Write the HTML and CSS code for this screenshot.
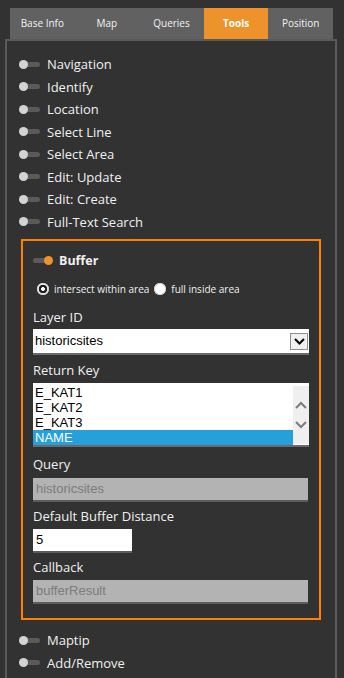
FILE: index.html
```html
<!DOCTYPE html>
<html lang="en">
<head>
    <meta charset="UTF-8">
    <meta name="viewport" content="width=device-width, initial-scale=1.0">
    <title>Tools</title>
    <link rel="stylesheet" href="styles.css">
</head>
<body>
    <div class="tabs">
        <div class="tab">Base Info</div>
        <div class="tab">Map</div>
        <div class="tab">Queries</div>
        <div class="tab active">Tools</div>
        <div class="tab">Position</div>
    </div>

    <div class="panel">
        <ul class="tools">
            <li class="tool"><span class="toggle"></span>Navigation</li>
            <li class="tool"><span class="toggle"></span>Identify</li>
            <li class="tool"><span class="toggle"></span>Location</li>
            <li class="tool"><span class="toggle"></span>Select Line</li>
            <li class="tool"><span class="toggle"></span>Select Area</li>
            <li class="tool"><span class="toggle"></span>Edit: Update</li>
            <li class="tool"><span class="toggle"></span>Edit: Create</li>
            <li class="tool"><span class="toggle"></span>Full-Text Search</li>
        </ul>

        <div class="buffer-box">
            <div class="tool tool-on"><span class="toggle"></span><b>Buffer</b></div>

            <div class="radios">
                <span class="radio checked"></span>
                <span class="radio-text">intersect within area</span>
                <span class="radio"></span>
                <span class="radio-text">full inside area</span>
            </div>

            <div class="field field-first">
                <label>Layer ID</label>
                <div class="select">
                    <span>historicsites</span>
                    <span class="drop-btn">
                        <svg width="11" height="7" viewBox="0 0 11 7"><polyline points="1,1 5.5,5.5 10,1" fill="none" stroke="#000" stroke-width="2"/></svg>
                    </span>
                </div>
            </div>

            <div class="field field-list">
                <label>Return Key</label>
                <div class="listbox">
                    <ul class="options">
                        <li>E_KAT1</li>
                        <li>E_KAT2</li>
                        <li>E_KAT3</li>
                        <li class="selected">NAME</li>
                    </ul>
                    <div class="scrollbar">
                        <svg width="12" height="8" viewBox="0 0 12 8"><polyline points="1,7 6,2 11,7" fill="none" stroke="#7d7d7d" stroke-width="2"/></svg>
                        <svg width="12" height="8" viewBox="0 0 12 8"><polyline points="1,1 6,6 11,1" fill="none" stroke="#7d7d7d" stroke-width="2"/></svg>
                    </div>
                </div>
            </div>

            <div class="field field-query">
                <label>Query</label>
                <div class="input disabled">historicsites</div>
            </div>

            <div class="field">
                <label>Default Buffer Distance</label>
                <div class="input short">5</div>
            </div>

            <div class="field">
                <label>Callback</label>
                <div class="input disabled">bufferResult</div>
            </div>
        </div>

        <ul class="tools tools-after">
            <li class="tool"><span class="toggle"></span>Maptip</li>
            <li class="tool"><span class="toggle"></span>Add/Remove</li>
        </ul>
    </div>
</body>
</html>
```

FILE: styles.css
```css
body {
    margin: 0;
    padding: 0;
    background-color: #323232;
    font-family: "Open Sans", sans-serif;
    color: #f0f0f0;
    height: 100vh;
    overflow: hidden;
}

/* tab strip */
.tabs {
    display: flex;
    width: 323px;
    height: 31px;
    margin: 8px 0 0 10px;
    background-color: #616161;
    position: relative;
    z-index: 2;
}

.tab {
    flex: 1;
    text-align: center;
    font-size: 10px;
    line-height: 31px;
    color: #f2f2f2;
}

.tab.active {
    background-color: #ee922c;
    font-weight: bold;
    color: #fff;
}

.panel {
    box-sizing: border-box;
    width: 332px;
    height: calc(100vh - 39px);
    margin-left: 5px;
    border: 2px solid #5a5a5a;
    border-bottom: none;
    padding: 12px 12px 0 12px;
}

.tools {
    list-style: none;
    margin: 0;
    padding: 0;
}

.tool {
    display: flex;
    align-items: center;
    height: 22.5px;
    font-size: 13px;
}

/* switch */
.toggle {
    position: relative;
    width: 21px;
    height: 5px;
    margin-right: 7px;
    border-radius: 3px;
    background-color: #5a5a5a;
}

.toggle::after {
    content: "";
    position: absolute;
    left: 0;
    top: -2px;
    width: 9px;
    height: 9px;
    border-radius: 50%;
    background-color: #d3d3d3;
}

.tool-on {
    height: 18px;
}

.tool-on .toggle {
    width: 19px;
    margin-right: 7px;
}

.tool-on .toggle::after {
    left: auto;
    right: -1px;
    background-color: #ee922c;
}

.tool-on b {
    font-size: 12.5px;
}

/* buffer settings */
.buffer-box {
    width: 300px;
    box-sizing: border-box;
    margin: 6px 0 0 2px;
    border: 2px solid #ff8000;
    padding: 10px 10px 14px 10px;
}

.radios {
    display: flex;
    align-items: center;
    height: 16px;
    margin-top: 12px;
    font-size: 10px;
}

.radio {
    width: 12px;
    height: 12px;
    margin: 0 5px 0 4px;
    border-radius: 50%;
    background-color: #fff;
    box-shadow: inset 0 0 0 1px #cfcfcf;
}

.radio.checked {
    background: radial-gradient(circle, #fff 0 1.6px, #1e1e1e 2.2px 4px, #fff 4.6px);
}

.radio-text + .radio {
    margin-left: 5px;
}

.field {
    margin-top: 5px;
}

.field label {
    display: block;
    font-size: 13px;
    line-height: 18px;
    margin-bottom: 4px;
}

.field-first {
    margin-top: 11px;
}

.field-first label {
    margin-bottom: 3px;
}

.field-list {
    margin-top: 6px;
}

.field-query {
    margin-top: 8px;
}

.field-query label {
    margin-bottom: 5px;
}

.select, .input, .listbox {
    box-sizing: content-box;
    font-family: "Liberation Sans", Arial, sans-serif;
    font-size: 13px;
    color: #000;
    background-color: #fff;
    border-bottom: 2px solid #6a6a6a;
}

.select {
    display: flex;
    align-items: center;
    justify-content: space-between;
    height: 24px;
    line-height: 24px;
    padding: 0 1px 0 2px;
}

.drop-btn {
    box-sizing: border-box;
    display: flex;
    align-items: center;
    justify-content: center;
    width: 18px;
    height: 17px;
    border: 1px solid #8e8e8e;
    background-color: #f0f0f0;
}

.listbox {
    display: flex;
    height: 62px;
    overflow: hidden;
}

.options {
    flex: 1;
    list-style: none;
    margin: 0;
    padding: 2px 0 0 0;
}

.options li {
    height: 15px;
    line-height: 15px;
    padding-left: 2px;
}

.options li.selected {
    background-color: #26a0da;
    color: #fff;
}

.scrollbar {
    width: 16px;
    margin: 3px 0 1px 0;
    background-color: #efefef;
    display: flex;
    flex-direction: column;
    align-items: center;
    justify-content: center;
    gap: 12px;
}

.input {
    height: 22px;
    line-height: 22px;
    padding: 0 3px;
    border-bottom-color: #5c5c5c;
}

.input.disabled {
    background-color: #b3b3b3;
    color: #7c7c7c;
    margin-right: 1px;
}

.input.short {
    width: 93px;
}

.tools-after {
    margin-top: 9px;
}
```
